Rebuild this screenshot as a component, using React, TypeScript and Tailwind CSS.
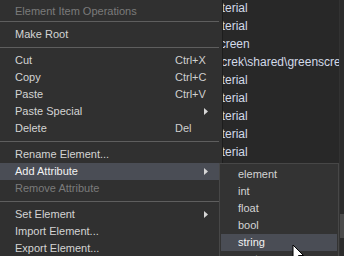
import React from "react";

type Item =
  | { kind: "item"; label: string; shortcut?: string; sub?: boolean; disabled?: boolean; active?: boolean }
  | { kind: "sep" };

const items: Item[] = [
  { kind: "item", label: "Make Root" },
  { kind: "sep" },
  { kind: "item", label: "Cut", shortcut: "Ctrl+X" },
  { kind: "item", label: "Copy", shortcut: "Ctrl+C" },
  { kind: "item", label: "Paste", shortcut: "Ctrl+V" },
  { kind: "item", label: "Paste Special", sub: true },
  { kind: "item", label: "Delete", shortcut: "Del" },
  { kind: "sep" },
  { kind: "item", label: "Rename Element..." },
  { kind: "item", label: "Add Attribute", sub: true, active: true },
  { kind: "item", label: "Remove Attribute", disabled: true },
  { kind: "sep" },
  { kind: "item", label: "Set Element", sub: true },
  { kind: "item", label: "Import Element..." },
  { kind: "item", label: "Export Element..." },
];

// lines of the tree view behind the menu, each shifted so the clipped part matches
const bgLines: { text: string; shift: string }[] = [
  { text: "material", shift: "ml-[-17px]" },
  { text: "material", shift: "ml-[-17px]" },
  { text: "greenscreen", shift: "ml-[-39px]" },
  { text: "c:\\dev\\crek\\shared\\greenscreen", shift: "ml-[-36px]" },
  { text: "material", shift: "ml-[-17px]" },
  { text: "material", shift: "ml-[-17px]" },
  { text: "material", shift: "ml-[-17px]" },
  { text: "material", shift: "ml-[-17px]" },
  { text: "material", shift: "ml-[-17px]" },
];

const subItems = ["element", "int", "float", "bool", "string", "vector"];

const Arrow = () => (
  <svg width="4" height="7" viewBox="0 0 4 7" className="absolute left-[204px] top-[5px]">
    <path d="M0 0 L4 3.5 L0 7 Z" fill="#d6d6d6" />
  </svg>
);

const App: React.FC = () => {
  return (
    <div
      className="relative w-[344px] h-[256px] overflow-hidden bg-[#282828] text-[11px]"
      style={{ fontFamily: '"Liberation Sans", Arial, sans-serif' }}
    >
      {/* tree view behind */}
      <div className="flex h-full">
        <div className="w-[222px] shrink-0" />
        <div className="flex-1 overflow-hidden -mt-px text-[12px] text-[#d3dae8]">
          {bgLines.map((l, i) => (
            <div key={i} className={`h-[18px] leading-[18px] whitespace-nowrap ${l.shift}`}>
              {l.text}
            </div>
          ))}
        </div>
        <div className="w-[5px] shrink-0 bg-[#2b2b2b] border-l border-[#323232] flex flex-col pt-[214px]">
          <div className="h-[24px] bg-[#4a4a4a]" />
        </div>
      </div>

      {/* context menu */}
      <div className="absolute left-0 top-0 w-[223px] h-[258px] bg-[#303030] border-r border-[#1d1d1d] pt-[4px]">
        <div className="h-[14px] leading-[14px] pl-[15px] text-[#7b7b7b]">Element Item Operations</div>
        <div className="mt-[3px] mb-[4px] mr-[3px] h-px bg-[#5e5e5e]" />
        {items.map((it, i) =>
          it.kind === "sep" ? (
            <div key={i} className="my-[4px] mr-[3px] h-px bg-[#5e5e5e]" />
          ) : (
            <div
              key={i}
              className={`relative h-[17px] leading-[17px] pl-[15px] ${
                it.active ? "bg-[#4a4d55] text-[#f2f2f2]" : ""
              } ${it.disabled ? "text-[#7b7b7b]" : "text-[#d4d4d4]"}`}
            >
              {it.label}
              {it.shortcut && (
                <span className="absolute left-[175px] top-0 text-[#cfcfcf]">{it.shortcut}</span>
              )}
              {it.sub && <Arrow />}
            </div>
          )
        )}
      </div>

      {/* submenu */}
      <div className="absolute left-[219px] top-[163px] w-[120px] h-[100px] bg-[#333333] border border-[#474747] pt-[2px] px-px">
        {subItems.map((s) => (
          <div
            key={s}
            className={`h-[17px] leading-[17px] pl-[17px] ${
              s === "string" ? "bg-[#4a4d55] text-[#f2f2f2]" : "text-[#d4d4d4]"
            }`}
          >
            {s}
          </div>
        ))}
      </div>

      {/* mouse pointer */}
      <svg width="13" height="20" viewBox="0 0 13 20" className="absolute left-[292px] top-[244px]">
        <path d="M1 1 L1 16 L4.5 12.5 L7 18.5 L9 17.5 L6.5 11.5 L11.5 11.5 Z" fill="#ffffff" stroke="#000000" strokeWidth="1" />
      </svg>
    </div>
  );
};

export default App;
